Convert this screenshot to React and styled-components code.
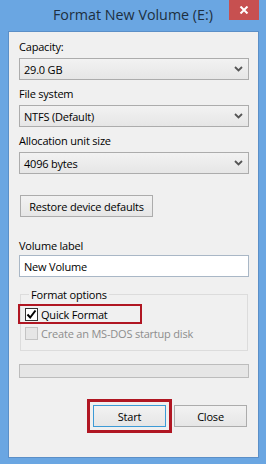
import React from "react";
import styled, { createGlobalStyle } from "styled-components";

const Global = createGlobalStyle`
  html, body { margin: 0; padding: 0; background: #6aa6e2; }
  * { box-sizing: border-box; }
  body { font-family: "Open Sans", "Noto Sans", sans-serif; }
`;

const Window = styled.div`
  width: 266px;
  height: 464px;
  background: #6aa6e2;
  display: flex;
  flex-direction: column;
  overflow: hidden;
`;

const TitleBar = styled.div`
  height: 31px;
  display: grid;
  grid-template-columns: 1fr auto 1fr;
  flex: none;
`;

const Title = styled.div`
  grid-column: 2;
  font-size: 14.3px;
  line-height: 20px;
  padding-top: 5px;
  color: #1d2f40;
  white-space: nowrap;
`;

const CloseButton = styled.div`
  grid-column: 3;
  justify-self: end;
  align-self: start;
  margin-right: 7px;
  width: 30px;
  height: 20px;
  background: #c75050;
  display: flex;
  align-items: center;
  justify-content: center;
`;

const Client = styled.div`
  flex: 1;
  margin: 0 7px 6px 8px;
  background: #f0f0f0;
  border: 1px solid #5b8fc7;
  padding: 7px 9px 0 10px;
  display: flex;
  flex-direction: column;
  font-size: 11px;
  letter-spacing: -0.2px;
  color: #000;
`;

const Field = styled.div`
  display: flex;
  flex-direction: column;
  gap: ${(p) => p.$gap ?? 4}px;
  margin-bottom: ${(p) => p.$mb ?? 6}px;
`;

const Label = styled.div`
  line-height: 15px;
  height: 15px;
  white-space: nowrap;
`;

const Select = styled.div`
  height: 22px;
  border: 1px solid #acacac;
  background: linear-gradient(#f2f2f2, #e6e6e6);
  display: flex;
  align-items: center;
  justify-content: space-between;
  padding: 0 5px 0 4px;
  line-height: 15px;
`;

const Button = styled.div`
  width: ${(p) => p.$w}px;
  height: 22px;
  border: 1px solid ${(p) => (p.$focus ? "#3c9ad6" : "#acacac")};
  background: linear-gradient(#f2f2f2, #e6e6e6);
  display: flex;
  align-items: center;
  justify-content: center;
  line-height: 15px;
  white-space: nowrap;
`;

const RestoreRow = styled.div`
  margin-top: 21px;
  margin-bottom: 21px;
  padding-left: 1px;
`;

const TextBox = styled.div`
  height: 22px;
  border: 1px solid #a9b7c6;
  background: #fff;
  display: flex;
  align-items: center;
  padding-left: 4px;
`;

const Group = styled.fieldset`
  margin: 10px 1px 0 1px;
  padding: 2px 4px 10px 4px;
  border: 1px solid #dcdcdc;
  display: flex;
  flex-direction: column;
  gap: 2px;
`;

const Legend = styled.legend`
  padding: 0 2px;
  margin-left: 4px;
  line-height: 15px;
`;

const Highlight = styled.div`
  border: ${(p) => p.$w}px solid #b01622;
  padding: ${(p) => p.$pad};
  margin: ${(p) => p.$m ?? 0};
  display: flex;
  align-items: center;
  width: ${(p) => (p.$width ? `${p.$width}px` : "auto")};
`;

const CheckRow = styled.div`
  display: flex;
  align-items: center;
  gap: 3px;
  height: ${(p) => p.$h}px;
  color: ${(p) => (p.$disabled ? "#8d8d8d" : "#000")};
  white-space: nowrap;
`;

const Box = styled.div`
  width: 13px;
  height: 13px;
  border: 1px solid ${(p) => (p.$disabled ? "#c4c4c4" : "#333")};
  background: ${(p) => (p.$disabled ? "#e6e6e6" : "#fff")};
  display: flex;
  align-items: center;
  justify-content: center;
  flex: none;
`;

const Progress = styled.div`
  margin-top: 13px;
  height: 14px;
  border: 1px solid #bcbcbc;
  background: #e6e6e6;
`;

const ButtonRow = styled.div`
  margin-top: 21px;
  display: flex;
  justify-content: flex-end;
  align-items: center;
  gap: 2px;
  padding-right: 2px;
`;

const Chevron = () => (
  <svg width="9" height="6" viewBox="0 0 9 6">
    <path d="M1 1 L4.5 4.5 L8 1" fill="none" stroke="#555" strokeWidth="1.8" />
  </svg>
);

export default function App() {
  return (
    <>
      <Global />
      <Window>
        <TitleBar>
          <Title>Format New Volume (E:)</Title>
          <CloseButton>
            <svg width="10" height="8" viewBox="0 0 10 8">
              <path d="M1.5 0.5 L8.5 7.5 M8.5 0.5 L1.5 7.5" stroke="#fff" strokeWidth="2" />
            </svg>
          </CloseButton>
        </TitleBar>
        <Client>
          <Field>
            <Label>Capacity:</Label>
            <Select>
              <span>29.0 GB</span>
              <Chevron />
            </Select>
          </Field>
          <Field>
            <Label>File system</Label>
            <Select>
              <span>NTFS (Default)</span>
              <Chevron />
            </Select>
          </Field>
          <Field $mb={0}>
            <Label>Allocation unit size</Label>
            <Select>
              <span>4096 bytes</span>
              <Chevron />
            </Select>
          </Field>
          <RestoreRow>
            <Button $w={133}>Restore device defaults</Button>
          </RestoreRow>
          <Field $mb={0} $gap={2}>
            <Label>Volume label</Label>
            <TextBox>New Volume</TextBox>
          </Field>
          <Group>
            <Legend>Format options</Legend>
            <Highlight $w={2} $pad="0 0 0 5px" $m="0 0 0 -7px" $width={124}>
              <CheckRow $h={16}>
                <Box>
                  <svg width="11" height="11" viewBox="0 0 11 11">
                    <path d="M1.5 5.5 L4.2 8.5 L9.5 1.5" fill="none" stroke="#000" strokeWidth="2" />
                  </svg>
                </Box>
                <span>Quick Format</span>
              </CheckRow>
            </Highlight>
            <CheckRow $h={14} $disabled>
              <Box $disabled />
              <span>Create an MS-DOS startup disk</span>
            </CheckRow>
          </Group>
          <Progress />
          <ButtonRow>
            <Highlight $w={3} $pad="3px">
              <Button $w={73} $focus>Start</Button>
            </Highlight>
            <Button $w={73}>Close</Button>
          </ButtonRow>
        </Client>
      </Window>
    </>
  );
}
